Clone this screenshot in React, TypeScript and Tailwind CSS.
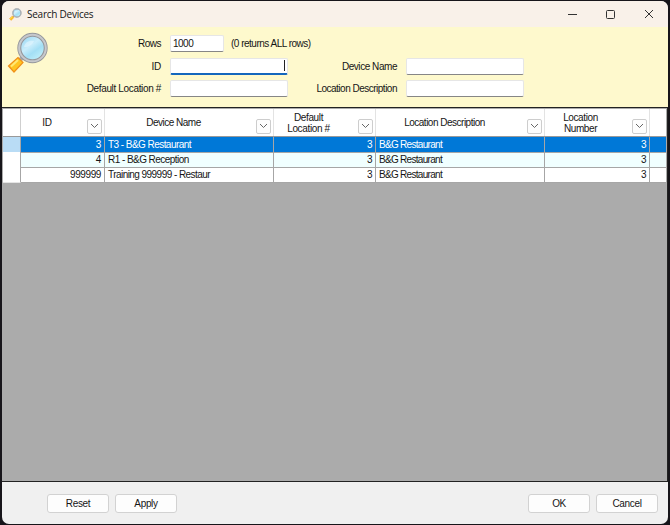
import { useId } from "react"

const rows = [
  { id: "3", name: "T3 - B&G Restaurant", loc: "3", desc: "B&G Restaurant", num: "3" },
  { id: "4", name: "R1 - B&G Reception", loc: "3", desc: "B&G Restaurant", num: "3" },
  { id: "999999", name: "Training 999999 - Restaur", loc: "3", desc: "B&G Restaurant", num: "3" },
]

function Magnifier({ className }: { className: string }) {
  const id = useId()
  return (
    <svg className={className} viewBox="0 0 42 42" fill="none">
      <defs>
        <linearGradient id={id} x1="18" y1="6" x2="34" y2="28" gradientUnits="userSpaceOnUse">
          <stop offset="0" stopColor="#a3dcf5" />
          <stop offset=".35" stopColor="#c9edfb" />
          <stop offset=".6" stopColor="#a3dff5" />
          <stop offset="1" stopColor="#c6f3fb" />
        </linearGradient>
      </defs>
      <path d="M16 25l-4 4" stroke="#a9a9a9" strokeWidth="4" />
      <path d="M1.5 34L11 25.5l5 5L7 40z" fill="#ffc522" stroke="#f09018" strokeWidth="1.2" />
      <path d="M4 34.5l7-6.5" stroke="#ffe875" strokeWidth="2" />
      <circle cx="25.5" cy="16" r="13.2" fill={`url(#${id})`} stroke="#96989c" strokeWidth="4" />
      <circle cx="25.5" cy="16" r="13.3" stroke="#c6c8cc" strokeWidth="2" />
      <path d="M17 15c1-5 5-7 10-6-2 4-5 6-10 6z" fill="#eefaff" opacity=".5" />
    </svg>
  )
}

function Field({ className = "w-[118px] border-b-[#868686]", value = "" }: { className?: string; value?: string }) {
  return (
    <div className={"ml-[9px] h-[17px] rounded-[2px] border border-[#e6e6e6] bg-white pl-[2px] leading-[16px] " + className}>
      {value}
    </div>
  )
}

function HeadCell({ label, className = "" }: { label: string; className?: string }) {
  return (
    <div className="flex items-center border-r border-[#e3e3e3]">
      <div className={"flex-1 whitespace-pre pr-[14px] text-center leading-[11px] " + className}>{label}</div>
      <div className="mr-[2px] mt-[7px] flex h-[15px] w-[15px] items-center justify-center rounded-[2px] border border-[#cdcdcd] bg-[#fdfdfd]">
        <svg width="9" height="6" viewBox="0 0 9 6" fill="none" stroke="#666">
          <path d="M1 1l3.5 3.5L8 1" />
        </svg>
      </div>
    </div>
  )
}

function Button({ label, className = "" }: { label: string; className?: string }) {
  return (
    <button className={"h-[19px] w-[62px] rounded-[3px] border border-[#d2d2d2] bg-[#fdfdfd] leading-none tracking-[-0.35px] " + className}>
      {label}
    </button>
  )
}

export default function App() {
  return (
    <div className="h-[525px] w-[670px] overflow-hidden bg-[#17151a] px-[2px] py-px font-['Liberation_Sans',Arial,sans-serif] text-[10px] tracking-[-0.5px] text-[#151515]">
      <div className="flex h-[523px] flex-col overflow-hidden rounded-[7px] bg-[#f0f0f0]">
        <header className="flex h-[26px] shrink-0 items-center bg-[#f9f1e9]">
          <Magnifier className="ml-[7px] h-[13px] w-[13px]" />
          <span className="ml-[5px] font-['Open_Sans','Noto_Sans',sans-serif] text-[10px] tracking-[-0.25px]">Search Devices</span>
          <svg className="ml-auto mr-[13px]" width="88" height="10" viewBox="0 0 88 10" fill="none" stroke="#333">
            <path d="M1 5.5h9" />
            <rect x="39.5" y="1.5" width="8" height="8" rx="1" />
            <path d="M78 1l8 8M86 1l-8 8" />
          </svg>
        </header>

        <section className="flex h-[80px] shrink-0 bg-[#fef9cd]">
          <Magnifier className="ml-[5px] mt-[5px] h-[42px] w-[42px]" />
          <div className="ml-[8px] mt-[8px] grid h-[63px] grid-cols-[104px_127px_109px_127px] content-between leading-[18px]">
            <span className="text-right">Rows</span>
            <div className="col-span-3 flex">
              <Field className="w-[54px] border-b-[#868686]" value="1000" />
              <span className="ml-[7px]">(0 returns ALL rows)</span>
            </div>
            <span className="text-right tracking-[-0.3px]">ID</span>
            <div className="ml-[9px] flex h-[17px] w-[118px] items-center justify-end rounded-[2px] border border-b-2 border-[#e6e6e6] border-b-[#1467bd] bg-white pr-[2px]">
              <div className="h-[11px] w-px bg-[#222]" />
            </div>
            <span className="text-right tracking-[-0.45px]">Device Name</span>
            <Field />
            <span className="text-right tracking-[-0.35px]">Default Location #</span>
            <Field />
            <span className="whitespace-nowrap text-right">Location Description</span>
            <Field />
          </div>
        </section>

        <main className="h-[375px] shrink-0 border-y border-r border-[#222] bg-[#ababab] pl-px pr-px pt-px">
          <div className="grid h-[28px] grid-cols-[18px_84px_169px_102px_169px_105px_1fr] border-b border-[#999] bg-white">
            <div className="border-r border-[#cfcfcf]" />
            <HeadCell label="ID" className="tracking-[-0.3px]" />
            <HeadCell label="Device Name" />
            <HeadCell label={"Default\nLocation #"} className="pr-[15px]! tracking-[-0.35px]" />
            <HeadCell label="Location Description" />
            <HeadCell label={"Location\nNumber"} className="pr-[16px]! tracking-[-0.4px]" />
            <div />
          </div>
          {rows.map((r, i) => {
            const colors = i === 0 ? "bg-[#0078d7] text-white" : i === 1 ? "bg-[#f0ffff]" : "bg-white"
            return (
              <div
                key={r.id}
                className={"grid h-[15px] grid-cols-[18px_84px_169px_102px_169px_105px_1fr] leading-[15px] *:border-b *:border-r *:border-[#a6a6a6] " + colors}
              >
                <div className={i === 0 ? "border-b-[#e5e5e5]! bg-[#b9dcf5]" : "border-b-[#e5e5e5]! bg-white"} />
                <div className="pr-[3px] text-right tracking-[-0.4px]">{r.id}</div>
                <div className="pl-[3px] tracking-[-0.55px]">{r.name}</div>
                <div className="pr-[3px] text-right">{r.loc}</div>
                <div className="pl-[3px] tracking-[-0.7px]">{r.desc}</div>
                <div className="pr-[3px] text-right">{r.num}</div>
                <div className="border-r-0!" />
              </div>
            )
          })}
        </main>

        <footer className="flex flex-1 items-start pl-[45px] pr-[10px] pt-[12px]">
          <Button label="Reset" />
          <Button label="Apply" className="ml-[6px]" />
          <Button label="OK" className="ml-auto" />
          <Button label="Cancel" className="ml-[6px]" />
        </footer>
      </div>
    </div>
  )
}
